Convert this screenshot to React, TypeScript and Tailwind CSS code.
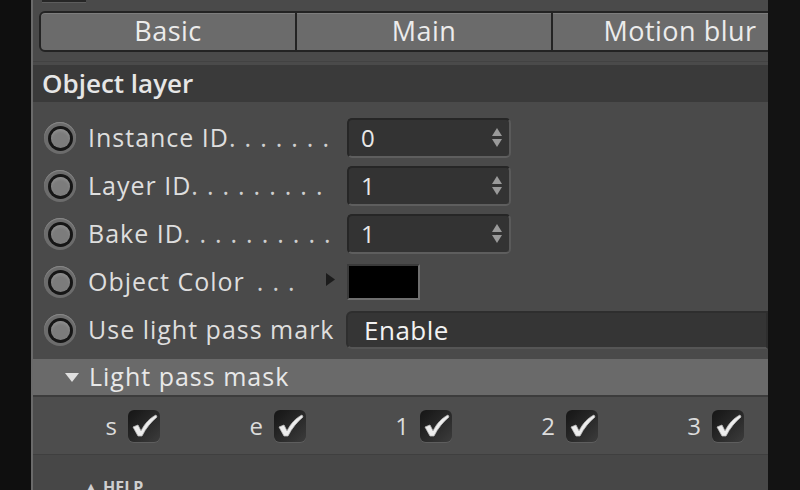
import type { ReactNode } from "react";

const font = { fontFamily: '"Open Sans", "Noto Sans", sans-serif' };

function Radio() {
  return (
    <div className="flex h-[32px] w-[32px] items-center justify-center rounded-full bg-[#6c6c6c] shadow-[inset_0_1px_1px_#8a8a8a]">
      <div className="flex h-[25px] w-[25px] items-center justify-center rounded-full bg-[#161616]">
        <div className="h-[19px] w-[19px] rounded-full bg-[#7c7c7c] shadow-[inset_0_2px_3px_#8f8f8f]" />
      </div>
    </div>
  );
}

function Spinner({ value }: { value: string }) {
  return (
    <div className="flex h-[40px] w-[164px] items-center justify-between rounded-[5px] border-2 border-[#262626] border-b-[#5e5e5e] border-r-[#5a5a5a] bg-[#333333] pl-[12px] pr-[6px]">
      <span className="text-[24px] text-[#e8e8e8]">{value}</span>
      <svg width="12" height="22" viewBox="0 0 12 22">
        <path d="M6 1 L11 9 L1 9 Z" fill="#9a9a9a" />
        <path d="M1 12 L11 12 L6 20 Z" fill="#9a9a9a" />
      </svg>
    </div>
  );
}

function Row({ label, dots, tail, children }: { label: string; dots?: number; tail?: ReactNode; children: ReactNode }) {
  return (
    <div className="flex h-[48px] shrink-0 items-center">
      <div className="ml-[11px] mr-[12px]">
        <Radio />
      </div>
      <div className="flex w-[259px] shrink-0 items-center whitespace-nowrap text-[25px] tracking-[1px] text-[#dedede]">
        <span>{label}</span>
        {dots && !tail ? <span className="ml-auto mr-[20px] tracking-[9px] text-[#cfcfcf]">{".".repeat(dots)}</span> : null}
        {dots && tail ? <span className="ml-[12px] tracking-[9px] text-[#cfcfcf]">{".".repeat(dots)}</span> : null}
        {tail}
      </div>
      {children}
    </div>
  );
}

function Check({ label }: { label: string }) {
  return (
    <div className="flex w-[146px] shrink-0 items-center justify-end gap-[11px] pr-[19px]">
      <span className="text-[24px] text-[#dcdcdc]">{label}</span>
      <div className="flex h-[32px] w-[32px] items-center justify-center rounded-[6px] bg-gradient-to-br from-[#151515] to-[#3c3c3c] shadow-[0_1px_0_#5e5e5e]">
        <svg width="28" height="26" viewBox="0 0 28 26">
          <path
            d="M3 14 L8 12 L11 18 C15 10 20 5 26 2 L27 4 C21 9 16 15 12 23 L8 23 Z"
            fill="#ededed"
            stroke="#bdbdbd"
            strokeWidth="0.8"
            strokeLinejoin="round"
          />
        </svg>
      </div>
    </div>
  );
}

export default function App() {
  return (
    <div className="flex h-[490px] w-[800px] overflow-hidden bg-[#111111]" style={font}>
      <div className="w-[31px] bg-[#0f0f0f]" />
      <div className="w-[2px] bg-[#6a6a6a]" />
      <div className="flex w-[735px] flex-col overflow-hidden bg-[#4a4a4a]">
        <div className="h-[11px] shrink-0 pl-[9px]">
          <div className="h-[3px] w-[44px] border-b border-[#5d5d5d] bg-[#262626]" />
        </div>

        <div className="flex h-[41px] shrink-0 pl-[6px]">
          {["Basic", "Main", "Motion blur"].map((t, i) => (
            <div
              key={t}
              className={`flex h-full w-[258px] shrink-0 items-center justify-center whitespace-nowrap border-2 border-[#232323] bg-[#6b6b6b] text-[27px] tracking-[0.5px] text-[#ececec] shadow-[inset_0_1px_0_#7d7d7d] ${i === 0 ? "rounded-l-[6px]" : "-ml-[2px]"}`}
            >
              {t}
            </div>
          ))}
        </div>

        <div className="h-[10px] shrink-0 border-b border-[#424242]" />
        <div className="mt-[3px] flex h-[37px] shrink-0 items-center bg-[#3a3a3a] pl-[9px] text-[26px] font-semibold text-[#e6e6e6]">
          Object layer
        </div>

        <div className="mt-[12px] flex shrink-0 flex-col">
          <Row label="Instance ID" dots={7}>
            <Spinner value="0" />
          </Row>
          <Row label="Layer ID" dots={9}>
            <Spinner value="1" />
          </Row>
          <Row label="Bake ID" dots={10}>
            <Spinner value="1" />
          </Row>
          <Row
            label="Object Color"
            dots={3}
            tail={
              <svg className="mb-[6px] ml-auto mr-[12px]" width="9" height="13" viewBox="0 0 9 13">
                <path d="M0 0 L9 6.5 L0 13 Z" fill="#1c1c1c" />
              </svg>
            }
          >
            <div className="h-[36px] w-[73px] border-2 border-[#6e6e6e] border-l-[#3a3a3a] border-t-[#3a3a3a] bg-black" />
          </Row>
          <Row label="Use light pass mark">
            <div className="-ml-[1px] flex h-[38px] flex-1 items-center rounded-l-[6px] border-2 border-[#2e2e2e] border-b-[#555555] bg-[#353535] pl-[16px] text-[26px] tracking-[0.5px] text-[#f2f2f2]">
              Enable
            </div>
          </Row>
        </div>

        <div className="mt-[5px] flex h-[38px] shrink-0 items-center border-b-2 border-[#3c3c3c] bg-[#6a6a6a] pl-[32px] text-[25px] tracking-[1px] text-[#e8e8e8]">
          <svg className="mr-[10px]" width="14" height="9" viewBox="0 0 14 9">
            <path d="M0 0 L14 0 L7 9 Z" fill="#e0e0e0" />
          </svg>
          Light pass mask
        </div>

        <div className="flex h-[58px] shrink-0 items-center border-b border-[#3f3f3f] bg-[#4d4d4d]">
          {["s", "e", "1", "2", "3"].map((c) => (
            <Check key={c} label={c} />
          ))}
        </div>

        <div className="flex flex-1 items-start bg-[#474747] pl-[50px] pt-[22px]">
          <span className="text-[16px] font-bold leading-[20px] text-[#cfcfcf]">▲ HELP</span>
        </div>
      </div>
      <div className="flex-1 bg-[#131313]" />
    </div>
  );
}
